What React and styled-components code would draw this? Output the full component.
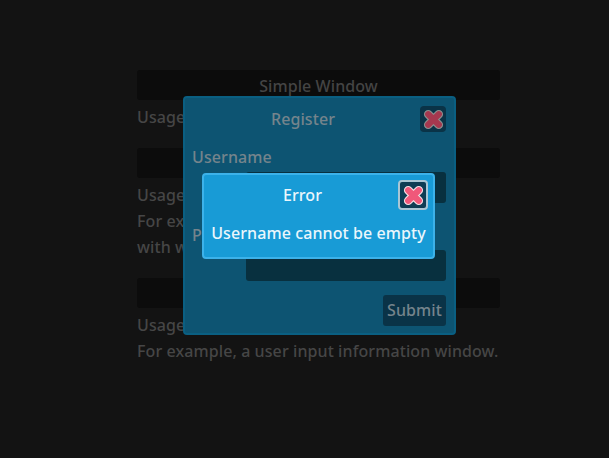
import React from 'react'
import styled, { createGlobalStyle } from 'styled-components'

const GlobalStyle = createGlobalStyle`
    html, body {
        margin: 0;
        height: 100%;
        background: #131313;
    }
    body {
        font-family: "Noto Sans", sans-serif;
        font-size: 16px;
        line-height: 26px;
    }
`

const Page = styled.div`
    position: relative;
    width: 609px;
    height: 458px;
    overflow: hidden;
    background: #131313;
`

const Column = styled.main`
    width: 363px;
    margin-left: 137px;
    padding-top: 70px;
    display: flex;
    flex-direction: column;
`

const Section = styled.section`
    margin-bottom: 18px;
`

const SectionTitle = styled.h2`
    margin: 0 0 4px;
    height: 30px;
    border-radius: 3px;
    background: #0c0c0c;
    color: #444444;
    font-size: 16px;
    font-weight: 500;
    letter-spacing: 0.09px;
    line-height: 33px;
    text-align: center;
`

const Line = styled.p`
    margin: 0;
    color: #464646;
    font-size: 16px;
    font-weight: 500;
    letter-spacing: 0.09px;
    white-space: nowrap;
`

const RegisterWindow = styled.div`
    position: absolute;
    left: 183px;
    top: 96px;
    box-sizing: border-box;
    width: 273px;
    height: 239px;
    padding: 8px 8px 8px 7px;
    display: flex;
    flex-direction: column;
    border: 2px solid #0a5f82;
    border-radius: 4px;
    background: #0d5472;
    color: #75848c;
    font-weight: 500;
    letter-spacing: 0.09px;
`

const WindowHeader = styled.header`
    display: flex;
    align-items: center;
`

const WindowTitle = styled.div`
    flex: 1;
    padding-right: ${p => p.$bright ? '2px' : '6px'};
    text-align: center;
    color: ${p => p.$bright ? '#eaf6fc' : '#75848c'};
`

const CloseButton = styled.button`
    box-sizing: border-box;
    width: ${p => p.$bright ? '30px' : '26px'};
    height: ${p => p.$bright ? '30px' : '26px'};
    padding: 0;
    display: flex;
    align-items: center;
    justify-content: center;
    border: ${p => p.$bright ? '2px solid #a9c6d4' : 'none'};
    border-radius: 4px;
    background: ${p => p.$bright ? '#0e3d54' : '#0a3347'};
`

const Form = styled.form`
    display: flex;
    flex-direction: column;
    margin-top: 12px;
`

const Label = styled.label`
    display: block;
    height: 28px;
    margin-top: ${p => p.$gap || 0}px;
`

const Input = styled.div`
    align-self: flex-end;
    width: 200px;
    height: 31px;
    border-radius: 3px;
    background: #08303f;
`

const Submit = styled.button`
    align-self: flex-end;
    box-sizing: border-box;
    width: 63px;
    height: 31px;
    margin-top: 14px;
    padding: 0;
    border: none;
    border-radius: 3px;
    background: #0a3347;
    color: #75848c;
    font: 500 16px/31px "Noto Sans", sans-serif;
    letter-spacing: 0.09px;
`

const ErrorWindow = styled.div`
    position: absolute;
    left: 202px;
    top: 173px;
    box-sizing: border-box;
    width: 233px;
    height: 86px;
    padding: 5px;
    border: 2px solid #3cb2ea;
    border-radius: 4px;
    background: #189bd6;
    color: #eaf6fc;
    font-weight: 500;
    letter-spacing: 0.09px;
`

const ErrorText = styled.div`
    margin-top: 10px;
    white-space: nowrap;
    text-align: center;
`

const CrossIcon = ({ fill, stroke }) => (
    <svg width="23" height="23" viewBox="0 0 24 24">
        <path
            d="M6.5 6.5 L17.5 17.5 M17.5 6.5 L6.5 17.5"
            fill="none"
            stroke={stroke}
            strokeWidth="9"
            strokeLinecap="round"
        />
        <path
            d="M6.5 6.5 L17.5 17.5 M17.5 6.5 L6.5 17.5"
            fill="none"
            stroke={fill}
            strokeWidth="6.5"
            strokeLinecap="round"
        />
    </svg>
)

const sections = [
    { title: 'Simple Window', lines: ['Usage: a simple window.'] },
    { title: 'Modal Window', lines: ['Usage: a modal window.', 'For example, a message', 'with window.'] },
    { title: 'Form Window', lines: ['Usage: a form window.', 'For example, a user input information window.'] },
]

export default function App() {
    return (
        <Page>
            <GlobalStyle />
            <Column>
                {sections.map(s => (
                    <Section key={s.title}>
                        <SectionTitle>{s.title}</SectionTitle>
                        {s.lines.map(l => <Line key={l}>{l}</Line>)}
                    </Section>
                ))}
            </Column>
            <RegisterWindow>
                <WindowHeader>
                    <WindowTitle>Register</WindowTitle>
                    <CloseButton type="button">
                        <CrossIcon fill="#a5384f" stroke="#8b8f8f" />
                    </CloseButton>
                </WindowHeader>
                <Form>
                    <Label>Username</Label>
                    <Input />
                    <Label $gap={19}>Password</Label>
                    <Input />
                    <Submit type="button">Submit</Submit>
                </Form>
            </RegisterWindow>
            <ErrorWindow>
                <WindowHeader>
                    <WindowTitle $bright>Error</WindowTitle>
                    <CloseButton type="button" $bright>
                        <CrossIcon fill="#f0587a" stroke="#f6dfe4" />
                    </CloseButton>
                </WindowHeader>
                <ErrorText>Username cannot be empty</ErrorText>
            </ErrorWindow>
        </Page>
    )
}
